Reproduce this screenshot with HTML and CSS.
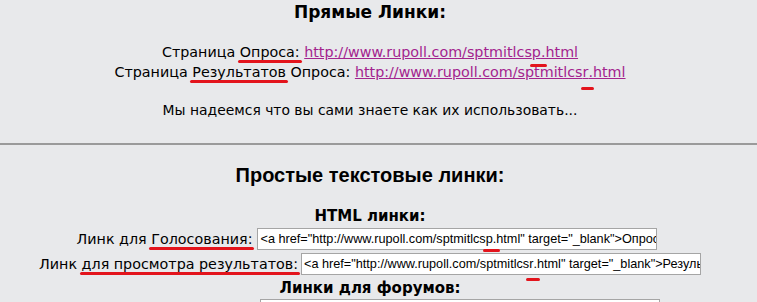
FILE: index.html
```html
<!DOCTYPE html>
<html lang="ru">
<head>
  <meta charset="UTF-8">
  <title>Линки</title>
  <link rel="stylesheet" href="styles.css">
</head>
<body>
  <div class="section">
    <h2 class="title">Прямые Линки:</h2>
    <p class="links">
      Страница <span class="mark">Опроса:</span> <a href="#">http://www.rupoll.com/sptmitlcs<span class="tick">p</span>.html</a><br>
      Страница <span class="mark">Результатов</span> Опроса: <a href="#">http://www.rupoll.com/sptmitlcs<span class="tick low">r</span>.html</a>
    </p>
    <p class="note">Мы надеемся что вы сами знаете как их использовать...</p>
  </div>
  <hr class="divider">
  <div class="section">
    <h2 class="subtitle">Простые текстовые линки:</h2>
    <h3 class="group">HTML линки:</h3>
    <div class="row first">
      <span class="label">Линк для <span class="mark">Голосования:</span></span>
      <div class="code">&lt;a href="http://www.rupoll.com/sptmitlcs<span class="tick">p</span>.html" target="_blank"&gt;Опрос&lt;/a&gt;</div>
    </div>
    <div class="row">
      <span class="label">Линк <span class="mark">для просмотра результатов:</span></span>
      <div class="code">&lt;a href="http://www.rupoll.com/sptmitlcs<span class="tick low">r</span>.html" target="_blank"&gt;Результаты&lt;/a&gt;</div>
    </div>
    <h3 class="group forum-title">Линки для форумов:</h3>
    <div class="row forum">
      <span class="label">Линк для Голосования:</span>
      <div class="code">[url=http://www.rupoll.com/sptmitlcsp.html]Опрос[/url]</div>
    </div>
  </div>
</body>
</html>
```

FILE: styles.css
```css
body {
  margin: 0;
  background-color: #e8e9eb;
  color: #000;
  font-family: "DejaVu Sans", Verdana, sans-serif;
  font-size: 14.3px;
}
.section {
  padding-right: 17px;
  text-align: center;
}
.title {
  margin: 0;
  padding-top: 1px;
  font-size: 17px;
  line-height: 22px;
}
.links {
  margin: 19px 0 0;
  line-height: 20px;
}
.links a {
  color: #a3238e;
}
.note {
  margin: 18px 0 0;
  font-size: 13.9px;
  line-height: 20px;
}
.mark {
  position: relative;
}
.mark::after {
  content: "";
  position: absolute;
  left: -2px;
  right: -2px;
  bottom: -3px;
  height: 3px;
  border-radius: 2px;
  background-color: #e3141c;
}
.tick {
  position: relative;
}
.tick::after {
  content: "";
  position: absolute;
  left: -2px;
  right: -6px;
  bottom: -7px;
  height: 3px;
  border-radius: 2px;
  background-color: #e3141c;
}
.tick.low::after {
  bottom: -10px;
}
.divider {
  margin: 23px 0 0;
  border: 0;
  border-top: 2px solid #9a9a9a;
}
.subtitle {
  margin: 0;
  padding-top: 18px;
  font-family: "Liberation Sans", Arial, sans-serif;
  font-size: 20px;
  line-height: 24px;
}
.group {
  margin: 0;
  padding-top: 20px;
  font-size: 15px;
  line-height: 18px;
}
.forum-title {
  padding-top: 3px;
  line-height: 20px;
}
.row {
  display: flex;
  justify-content: center;
  align-items: center;
  gap: 3px;
  margin-top: 3px;
}
.row.first {
  gap: 5px;
  margin-left: -6px;
}
.row.forum {
  align-items: flex-start;
  gap: 5px;
  margin-top: 1px;
}
.label {
  line-height: 20px;
}
.forum .label {
  padding-top: 3px;
}
.code {
  width: 394px;
  height: 20px;
  padding: 0 2px;
  overflow-x: clip;
  overflow-y: visible;
  white-space: nowrap;
  text-align: left;
  background-color: #fff;
  border: 1px solid #a5a5a5;
  font-family: "Liberation Sans", Arial, sans-serif;
  font-size: 12.7px;
  line-height: 20px;
}
.code .tick::after {
  left: -3px;
  right: -7px;
  bottom: -6px;
}
.code .tick.low::after {
  bottom: -10px;
}
```
